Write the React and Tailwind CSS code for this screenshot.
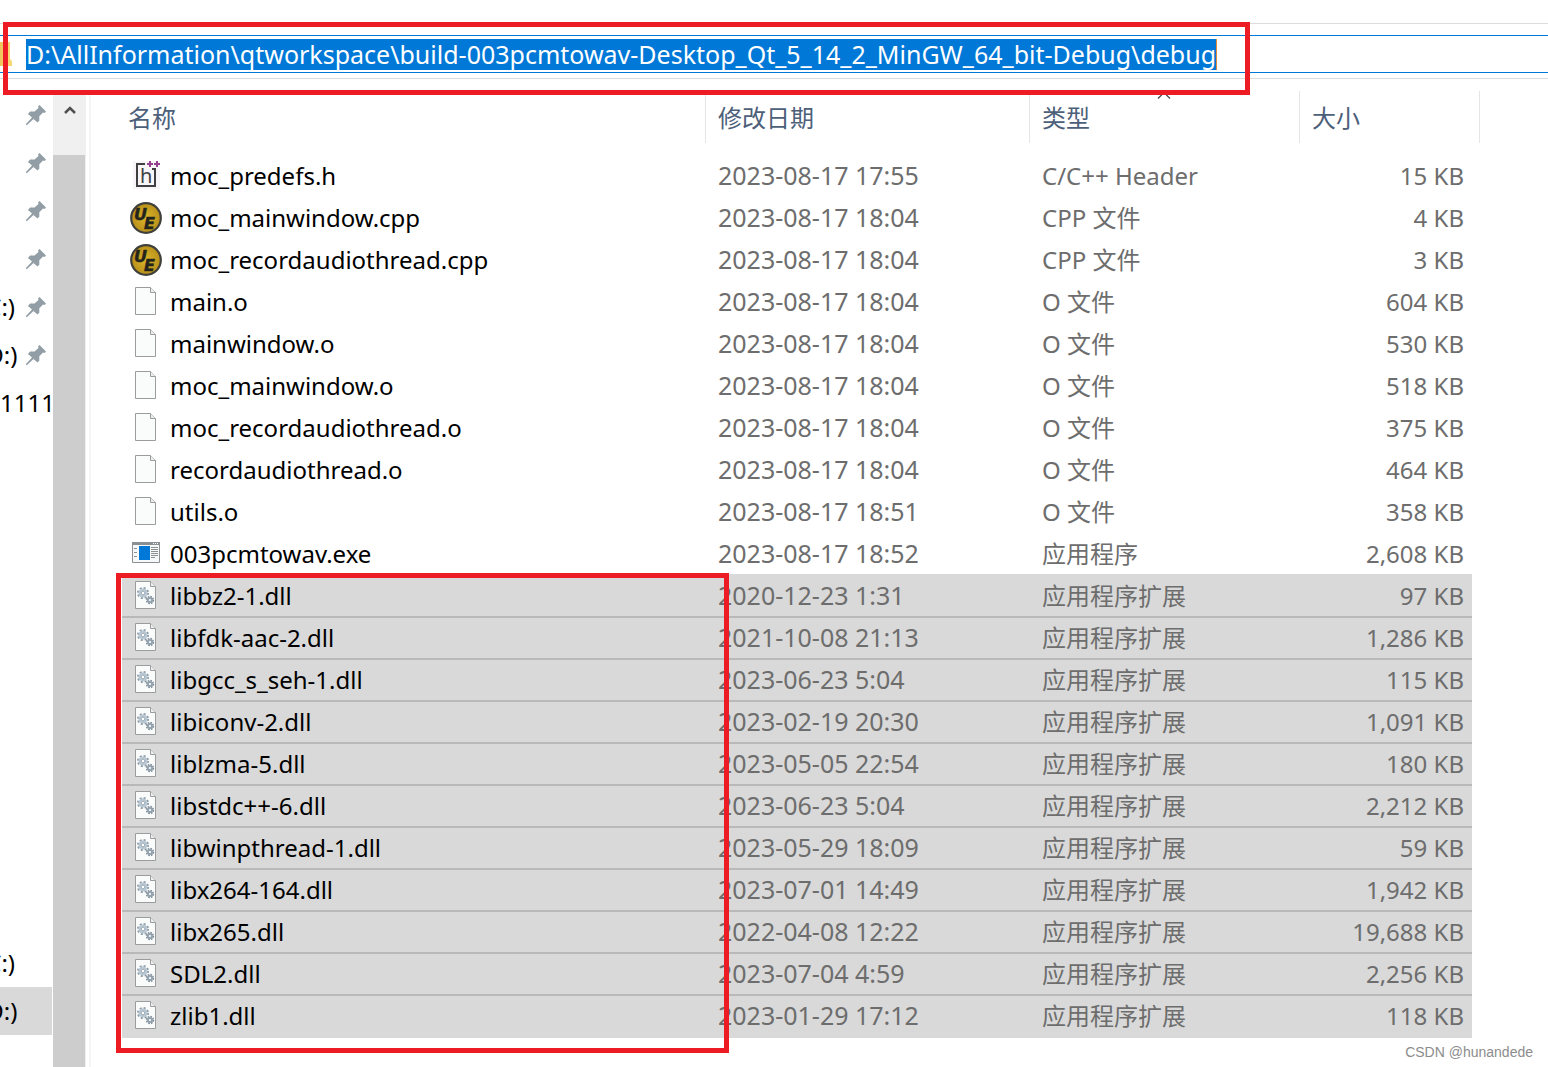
import { clsx } from 'clsx';

const PATH =
  'D:\\AllInformation\\qtworkspace\\build-003pcmtowav-Desktop_Qt_5_14_2_MinGW_64_bit-Debug\\debug';

const files = [
  { name: 'moc_predefs.h', date: '2023-08-17 17:55', type: 'C/C++ Header', size: '15 KB', icon: 'header' },
  { name: 'moc_mainwindow.cpp', date: '2023-08-17 18:04', type: 'CPP 文件', size: '4 KB', icon: 'ue' },
  { name: 'moc_recordaudiothread.cpp', date: '2023-08-17 18:04', type: 'CPP 文件', size: '3 KB', icon: 'ue' },
  { name: 'main.o', date: '2023-08-17 18:04', type: 'O 文件', size: '604 KB', icon: 'file' },
  { name: 'mainwindow.o', date: '2023-08-17 18:04', type: 'O 文件', size: '530 KB', icon: 'file' },
  { name: 'moc_mainwindow.o', date: '2023-08-17 18:04', type: 'O 文件', size: '518 KB', icon: 'file' },
  { name: 'moc_recordaudiothread.o', date: '2023-08-17 18:04', type: 'O 文件', size: '375 KB', icon: 'file' },
  { name: 'recordaudiothread.o', date: '2023-08-17 18:04', type: 'O 文件', size: '464 KB', icon: 'file' },
  { name: 'utils.o', date: '2023-08-17 18:51', type: 'O 文件', size: '358 KB', icon: 'file' },
  { name: '003pcmtowav.exe', date: '2023-08-17 18:52', type: '应用程序', size: '2,608 KB', icon: 'exe' },
];

const libs = [
  { name: 'libbz2-1.dll', date: '2020-12-23 1:31', size: '97 KB' },
  { name: 'libfdk-aac-2.dll', date: '2021-10-08 21:13', size: '1,286 KB' },
  { name: 'libgcc_s_seh-1.dll', date: '2023-06-23 5:04', size: '115 KB' },
  { name: 'libiconv-2.dll', date: '2023-02-19 20:30', size: '1,091 KB' },
  { name: 'liblzma-5.dll', date: '2023-05-05 22:54', size: '180 KB' },
  { name: 'libstdc++-6.dll', date: '2023-06-23 5:04', size: '2,212 KB' },
  { name: 'libwinpthread-1.dll', date: '2023-05-29 18:09', size: '59 KB' },
  { name: 'libx264-164.dll', date: '2023-07-01 14:49', size: '1,942 KB' },
  { name: 'libx265.dll', date: '2022-04-08 12:22', size: '19,688 KB' },
  { name: 'SDL2.dll', date: '2023-07-04 4:59', size: '2,256 KB' },
  { name: 'zlib1.dll', date: '2023-01-29 17:12', size: '118 KB' },
].map((f) => ({ ...f, type: '应用程序扩展', icon: 'dll' }));

function HeaderIcon() {
  return (
    <svg width="32" height="32" viewBox="0 0 32 32">
      <path d="M3 1h27v28H3z" fill="#f7f5f7" />
      <path d="M15 4H7v22h18V9M22 9h4" fill="none" stroke="#3f3f41" strokeWidth="2" />
      <text x="10" y="23" fontSize="20" fill="#3f3f41" fontFamily="Noto Sans, sans-serif">h</text>
      <path d="M17 4h6M20 1v6M24 4h6M27 1v6" stroke="#963f8f" strokeWidth="2" />
    </svg>
  );
}

function UeIcon() {
  return (
    <svg width="32" height="32" viewBox="0 1 32 32">
      <defs>
        <radialGradient id="ue-gold">
          <stop offset="0" stopColor="#dcb52a" />
          <stop offset="1" stopColor="#b8901a" />
        </radialGradient>
      </defs>
      <circle cx="16" cy="17" r="14.8" fill="url(#ue-gold)" stroke="#3f3f3b" strokeWidth="2.2" />
      <g fill="#24241c" stroke="#24241c" strokeWidth=".5" fontFamily="DejaVu Sans, sans-serif" fontWeight="bold" fontStyle="italic" fontSize="16">
        <text x="4" y="19">U</text>
        <text x="14" y="28">E</text>
      </g>
    </svg>
  );
}

function Sheet({ children }) {
  return (
    <svg width="32" height="32" viewBox="0 1 32 32">
      <path d="M5.500 2.500h15l5 5v22h-20z" fill="#fafbfb" stroke="#9a9c9d" />
      <path d="M20.500 2.500v5h5" fill="#eceeef" stroke="#9a9c9d" />
      {children}
    </svg>
  );
}

function DllIcon() {
  return (
    <Sheet>
      <circle cx="13" cy="14" r="5" fill="none" stroke="#8d9aa5" strokeWidth="2" strokeDasharray="2 1.93" />
      <circle cx="13" cy="14" r="3.2" fill="#fff" stroke="#b7c7d3" strokeWidth="2.6" />
      <circle cx="13" cy="14" r="1.8" fill="#fff" stroke="#8d9aa5" strokeWidth=".8" />
      <circle cx="20" cy="21" r="3.2" fill="none" stroke="#7f8b95" strokeWidth="2" strokeDasharray="1.5 1" />
      <circle cx="20" cy="21" r="2.1" fill="#fff" stroke="#93a3b0" strokeWidth="2" />
    </Sheet>
  );
}

function ExeIcon() {
  return (
    <svg width="32" height="32" viewBox="0 1 32 32">
      <path d="M2.500 5.500h27v20h-27z" fill="#f7f8f8" stroke="#8b9095" />
      <path d="M2 5h28v3H2z" fill="#8b9095" />
      <path d="M23 6.500h1M25 6.500h1M27 6.500h1" stroke="#fff" />
      <path d="M4 11.500h3M4 15.500h3M4 19.500h3M21 10.500h7M21 12.500h7M21 14.500h7M21 16.500h7M21 18.500h7M21 20.500h4" stroke="#8b9095" />
      <path d="M9 9h11v14H9z" fill="#0078d7" />
    </svg>
  );
}

const icons = { header: HeaderIcon, ue: UeIcon, file: Sheet, exe: ExeIcon, dll: DllIcon };

function Pin() {
  return (
    <svg className="absolute left-[26px] top-[14px]" width="20" height="20" viewBox="0 0 20 20" fill="#929ea6">
      <path d="M13.500 0 20 6.500 18.500 8 17 7.500 13.300 11.200V15.500L11.500 17.500 7.500 14 1 20H0V19L6 12.500 2 9 4 6.500H8.500L12.500 3 12 1.500Z" />
    </svg>
  );
}

function SideItem({ children, pinned, active }) {
  return (
    <li className={clsx('relative flex h-12 items-center', active && 'mr-px bg-[#d9d9d9]')}>
      {children}
      {pinned && <Pin />}
    </li>
  );
}

function Drive({ letter }) {
  return <span className="-ml-[21px] whitespace-nowrap">({letter}:)</span>;
}

function Row({ file, selected, first, last }) {
  const Icon = icons[file.icon];
  const cell = clsx(
    'border-t-2 p-0',
    last ? 'h-11 border-b-2 border-b-[#d9d9d9]' : 'h-[42px]',
    selected ? 'bg-[#d9d9d9]' : 'border-transparent',
    selected && (first ? 'border-t-[#d9d9d9]' : 'border-t-[#b9b9b9]')
  );
  return (
    <tr>
      <td className={cell}>
        <div className="flex items-center gap-2 pl-2 leading-[38px] text-black">
          <Icon />
          <span>{file.name}</span>
        </div>
      </td>
      <td className={clsx(cell, 'pb-0.5 pl-3 text-[25px] leading-9')}>{file.date}</td>
      <td className={clsx(cell, 'pl-3 leading-[38px]')}>{file.type}</td>
      <td className={clsx(cell, 'pr-2 text-right leading-[38px]')}>{file.size}</td>
    </tr>
  );
}

export default function App() {
  return (
    <div className="flex min-h-screen flex-col overflow-hidden bg-white font-['Noto_Sans','Noto_Sans_CJK_SC',sans-serif] text-[24px] text-[#6d6d6d]">
      {/* Address bar */}
      <header className="relative mt-[23px] h-14 border-y border-y-[#dcdcdc] pt-[11px]">
        <label className="flex h-[38px] items-center border-y border-[#0078d7]">
          <svg className="mr-[14px]" width="12" height="24" viewBox="0 0 12 24" aria-label="地址">
            <path d="M0 0h10v17l2 2v5H0z" fill="#f8d775" />
            <path d="M0 0h8v24H0z" fill="#f0c75e" />
          </svg>
          <input
            className="field-sizing-content h-[31px] border-r border-[#e08a3c] bg-[#0078d7] pt-0.5 text-[25px] text-white outline-none"
            defaultValue={PATH}
          />
        </label>
        <div className="pointer-events-none absolute -top-0.5 left-[3px] z-10 h-[73px] w-[1247px] border-5 border-[#ed1c24]" />
      </header>

      <div className="flex flex-1 pt-3">
        {/* Navigation pane */}
        <nav className="w-[53px] overflow-hidden pb-8 text-black">
          <ul className="flex h-full flex-col">
            <SideItem pinned />
            <SideItem pinned />
            <SideItem pinned />
            <SideItem pinned />
            <SideItem pinned><Drive letter="C" /></SideItem>
            <SideItem pinned><Drive letter="D" /></SideItem>
            <SideItem>1111</SideItem>
            <li className="flex-1" />
            <SideItem><Drive letter="C" /></SideItem>
            <SideItem active><Drive letter="D" /></SideItem>
          </ul>
        </nav>
        <div className="flex w-[33px] flex-col bg-[#f0f0f0] pt-[13px]">
          <button className="flex h-[51px] justify-center" aria-label="向上">
            <svg width="12" height="12" viewBox="0 0 12 12">
              <path d="M1 9 6 4l5 5" fill="none" stroke="#505050" strokeWidth="2.500" />
            </svg>
          </button>
          <div className="mr-px flex-1 bg-[#cdcdcd]" />
        </div>
        <div className="ml-[3px] w-0.5 bg-[#f5f5f5]" />

        {/* File list */}
        <main className="flex-1 pr-[68px] pl-[31px]">
          <div className="relative">
            <table className="w-full table-fixed border-separate border-spacing-0 text-left">
              <colgroup>
                <col />
                <col className="w-[324px]" />
                <col className="w-[270px]" />
                <col className="w-[172px]" />
                <col className="w-2" />
              </colgroup>
              <thead className="text-[#4c607a]">
                <tr>
                  <th className="h-[52px] border-r border-[#e5e5e5] p-0 pt-0.5 pl-1.5 font-normal">名称</th>
                  <th className="border-r border-[#e5e5e5] p-0 pt-0.5 pl-3 font-normal">修改日期</th>
                  <th className="relative border-r border-[#e5e5e5] p-0 pt-0.5 pl-3 font-normal">
                    类型
                    <svg className="absolute top-0 left-[127px]" width="14" height="8" viewBox="0 0 14 8">
                      <path d="M1 7.500 7 1.500l6 6" fill="none" stroke="#444" strokeWidth="1.200" />
                    </svg>
                  </th>
                  <th className="p-0 pt-0.5 pl-3 font-normal">大小</th>
                  <td className="border-r border-[#e5e5e5]" />
                </tr>
                <tr>
                  <td className="h-[11px] p-0" colSpan={5} />
                </tr>
              </thead>
              <tbody>
                {files.map((f) => (
                  <Row key={f.name} file={f} />
                ))}
                {libs.map((f, i) => (
                  <Row key={f.name} file={f} selected first={i === 0} last={i === libs.length - 1} />
                ))}
              </tbody>
            </table>
            <div className="pointer-events-none absolute -bottom-[15px] -left-1.5 h-[480px] w-[613px] border-5 border-[#ed1c24]" />
          </div>
          <p className="mt-1 -mr-[53px] text-right font-['Liberation_Sans',sans-serif] text-sm text-[#8c8c8c]">
            CSDN @hunandede
          </p>
        </main>
      </div>
    </div>
  );
}
